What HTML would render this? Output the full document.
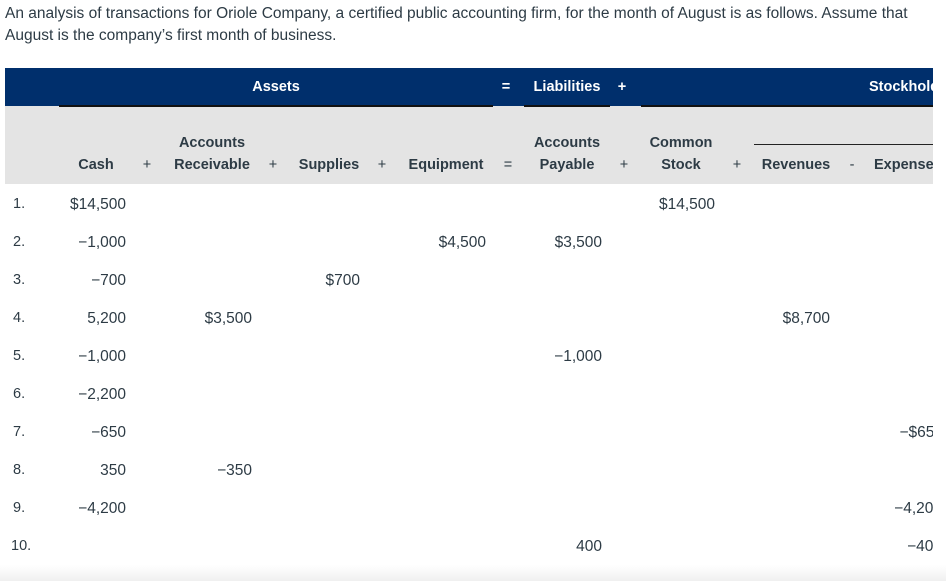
<!DOCTYPE html>
<html><head><meta charset="utf-8"><style>
body{margin:0;width:946px;height:581px;overflow:hidden;background:#fff;font-family:"Liberation Sans",sans-serif;color:#2d3b45;position:relative}
.p{position:absolute;left:5px;top:3px;font-size:15.5px;line-height:22px;width:925px;color:#2d3b45}
.clip{position:absolute;left:0;top:0;width:933px;height:581px;overflow:hidden}
.nav{position:absolute;left:5px;top:68px;width:940px;height:38px;background:#002f6c}
.gray{position:absolute;left:5px;top:106px;width:940px;height:78px;background:#e4e4e4}
.bl{position:absolute;top:105px;height:2px;background:#111}
.t{position:absolute;font-size:14.5px;white-space:nowrap;line-height:18px;transform:translate(-50%,-50%)}
.w{color:#fff;font-weight:bold}
.b{font-weight:bold}
.r{position:absolute;font-size:15.5px;white-space:nowrap;line-height:18px;transform:translate(-100%,-50%);margin-top:2px}
.n{position:absolute;font-size:14.5px;line-height:18px;transform:translateY(-50%);left:13px;margin-top:1px}
.fade{position:absolute;left:0;top:565px;width:946px;height:16px;background:linear-gradient(#fff,#f0f0f0)}
</style></head><body>
<div class="p">An analysis of transactions for Oriole Company, a certified public accounting firm, for the month of August is as follows. Assume that August is the company’s first month of business.</div>
<div class="fade"></div>
<div class="clip">
<div class="nav"></div>
<div class="gray"></div>
<div class="bl" style="left:59px;width:434px"></div>
<div class="bl" style="left:524px;width:86px"></div>
<div class="bl" style="left:641px;width:300px"></div>
<div style="position:absolute;left:754px;top:144px;width:200px;height:1px;background:#222"></div>
<span class="t w" style="left:276px;top:87px">Assets</span>
<span class="t w" style="left:506px;top:87px">=</span>
<span class="t w" style="left:567px;top:87px">Liabilities</span>
<span class="t w" style="left:622px;top:87px">+</span>
<span class="t w" style="left:869px;top:87px;transform:translateY(-50%)">Stockholders' Equity</span>

<span class="t b" style="left:96px;top:165px">Cash</span>
<span class="t" style="left:147px;top:165px">+</span>
<span class="t b" style="left:212px;top:143px">Accounts</span>
<span class="t b" style="left:212px;top:165px">Receivable</span>
<span class="t" style="left:273px;top:165px">+</span>
<span class="t b" style="left:329px;top:165px">Supplies</span>
<span class="t" style="left:382px;top:165px">+</span>
<span class="t b" style="left:446px;top:165px">Equipment</span>
<span class="t" style="left:508px;top:165px">=</span>
<span class="t b" style="left:567px;top:143px">Accounts</span>
<span class="t b" style="left:567px;top:165px">Payable</span>
<span class="t" style="left:624px;top:165px">+</span>
<span class="t b" style="left:681px;top:143px">Common</span>
<span class="t b" style="left:681px;top:165px">Stock</span>
<span class="t" style="left:737px;top:165px">+</span>
<span class="t b" style="left:796px;top:165px">Revenues</span>
<span class="t" style="left:852px;top:165px">-</span>
<span class="t b" style="left:874px;top:165px;transform:translateY(-50%)">Expenses</span>

<span class="n" style="top:203px">1.</span><span class="n" style="top:241px">2.</span><span class="n" style="top:279px">3.</span><span class="n" style="top:317px">4.</span><span class="n" style="top:355px">5.</span><span class="n" style="top:393px">6.</span><span class="n" style="top:431px">7.</span><span class="n" style="top:469px">8.</span><span class="n" style="top:507px">9.</span><span class="n" style="top:545px;left:11px">10.</span>

<span class="r" style="left:126px;top:203px">$14,500</span>
<span class="r" style="left:715px;top:203px">$14,500</span>
<span class="r" style="left:126px;top:241px">−1,000</span>
<span class="r" style="left:486px;top:241px">$4,500</span>
<span class="r" style="left:602px;top:241px">$3,500</span>
<span class="r" style="left:126px;top:279px">−700</span>
<span class="r" style="left:360px;top:279px">$700</span>
<span class="r" style="left:126px;top:317px">5,200</span>
<span class="r" style="left:252px;top:317px">$3,500</span>
<span class="r" style="left:830px;top:317px">$8,700</span>
<span class="r" style="left:126px;top:355px">−1,000</span>
<span class="r" style="left:602px;top:355px">−1,000</span>
<span class="r" style="left:126px;top:393px">−2,200</span>
<span class="r" style="left:126px;top:431px">−650</span>
<span class="r" style="left:943px;top:431px">−$650</span>
<span class="r" style="left:126px;top:469px">350</span>
<span class="r" style="left:252px;top:469px">−350</span>
<span class="r" style="left:126px;top:507px">−4,200</span>
<span class="r" style="left:942px;top:507px">−4,200</span>
<span class="r" style="left:602px;top:545px">400</span>
<span class="r" style="left:942px;top:545px">−400</span>
</div>
</body></html>
